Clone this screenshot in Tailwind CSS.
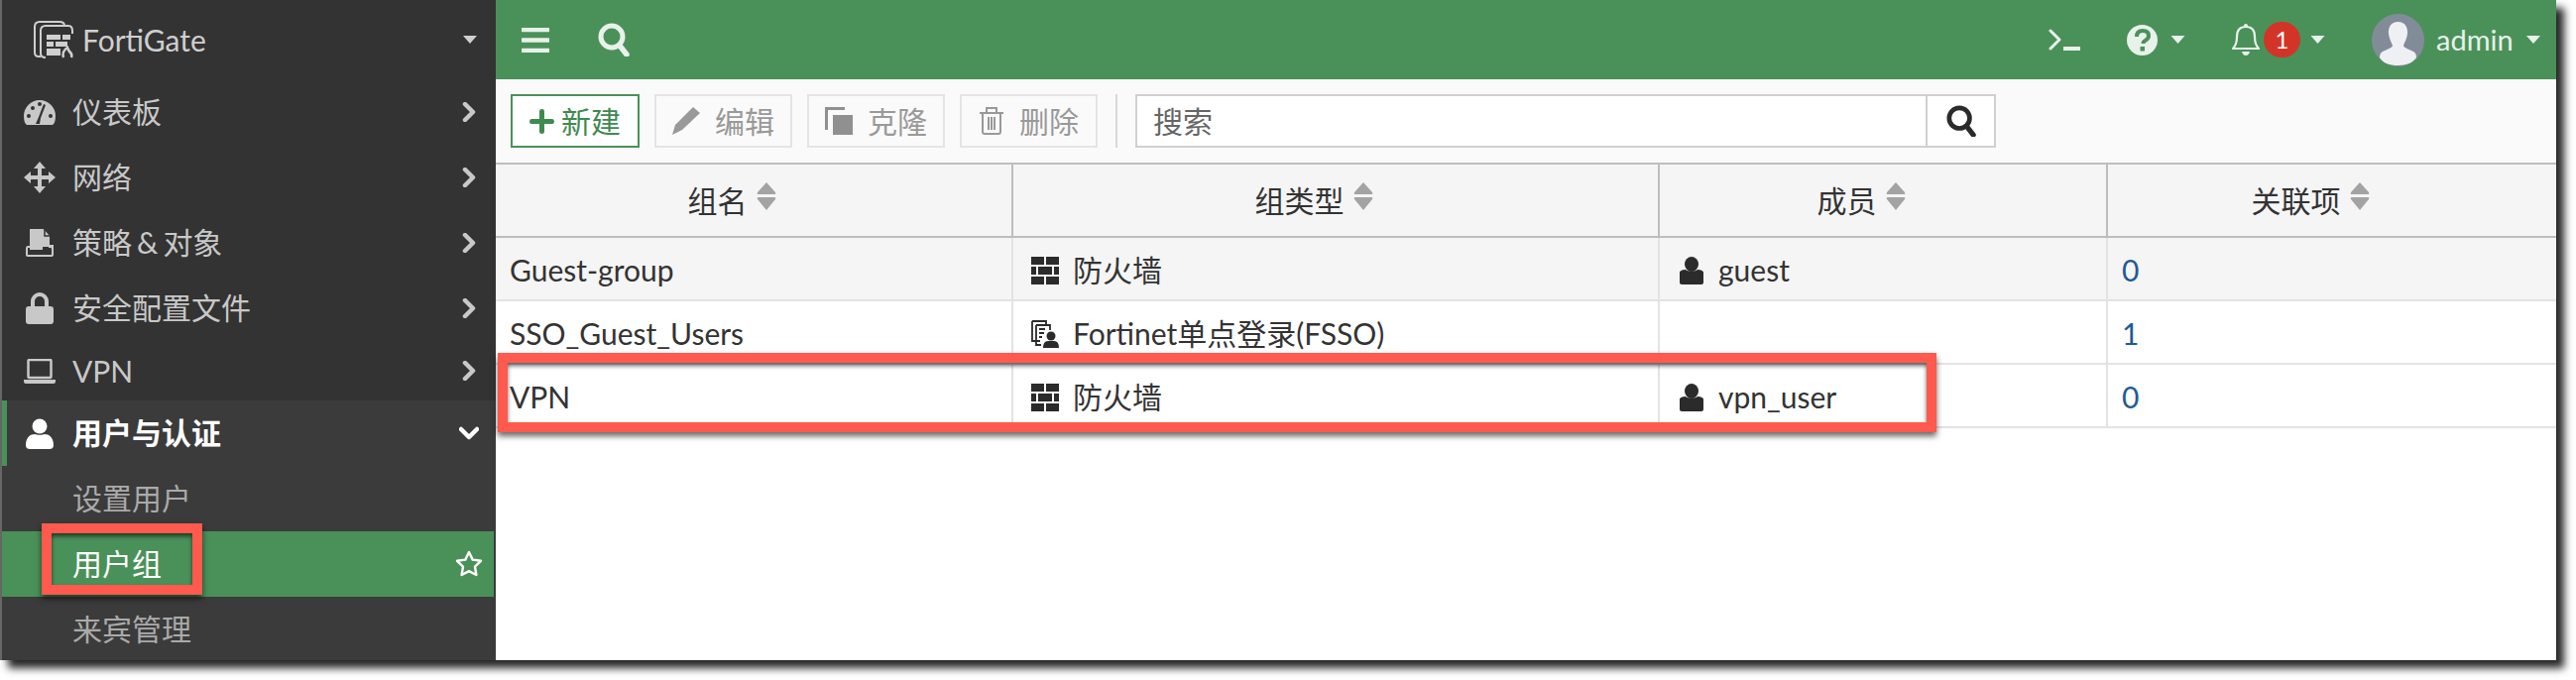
<!DOCTYPE html>
<html lang="zh-CN">
<head>
  <meta charset="UTF-8" />
  <title>FortiGate 用户组</title>
  <script src="https://cdn.jsdelivr.net/npm/@tailwindcss/browser@4"></script>
</head>
<body class="bg-white h-[686px] w-[2598px] overflow-hidden font-['Lato','Noto_Sans_CJK_SC',sans-serif] text-[30px] text-[#333]">
  <svg class="hidden">
    <symbol id="chev" viewBox="0 0 14 20"><path d="M3 2l8 8-8 8" fill="none" stroke="currentColor" stroke-width="4.5" stroke-linejoin="round" stroke-linecap="round"/></symbol>
    <symbol id="caret" viewBox="0 0 14 8"><path d="M0 0h14L7 8z" fill="currentColor"/></symbol>
    <symbol id="user" viewBox="0 0 28 31"><circle cx="14" cy="8" r="7.5" fill="currentColor"/><path d="M0 27c0-8 5-11 9-11 2 1 8 1 10 0 4 0 9 3 9 11 0 3-2 4-4 4H4c-2 0-4-1-4-4z" fill="currentColor"/></symbol>
    <symbol id="sort" viewBox="0 0 20 28"><path d="M10 0L19 10Q20 12 18 12H2Q0 12 1 10z M2 15H18Q20 15 19 17L10 28L1 17Q0 15 2 15z" fill="#a3a3a3"/></symbol>
    <symbol id="brick" viewBox="0 0 28 28"><path d="M0 0h13v8H0zM15 0h13v8H15zM0 10h5v8H0zM7 10h14v8H7zM23 10h5v8h-5zM0 20h13v8H0zM15 20h13v8H15z" fill="#2b2b2b"/></symbol>
    <symbol id="member" viewBox="0 0 24 28"><ellipse cx="12" cy="7.5" rx="7" ry="7.5" fill="#2b2b2b"/><path d="M0 16c0-2 3-3 6-3 2 2 10 2 12 0 3 0 6 1 6 3v10c0 1-1 2-2 2H2c-1 0-2-1-2-2z" fill="#2b2b2b"/></symbol>
    <symbol id="search" viewBox="0 0 32 34"><circle cx="14" cy="14" r="11" fill="none" stroke="currentColor" stroke-width="5"/><path d="M22 23l7 9" stroke="currentColor" stroke-width="5.5" stroke-linecap="round"/></symbol>
  </svg>

  <div class="relative flex w-[2578px] h-[666px] border-l-2 border-[#666] shadow-[8px_8px_8px_rgba(0,0,0,0.85)]">
    <!-- 侧边栏 -->
    <aside class="w-[498px] h-full overflow-hidden bg-[#333] text-[#c8c8c8] shrink-0">
      <div class="h-[80px] flex items-center pl-[31px] pr-[18px] text-[#cfcfcf]">
        <svg class="w-[42px] h-[40px]" viewBox="0 0 42 40" fill="none" stroke="currentColor" stroke-width="2">
          <path d="M8 37H6q-4 0-4-4V7q0-5 5-5h20q5 0 5 4"/>
          <path d="M13 38q-5 0-5-4V11q0-5 5-5h23q4 0 4 5v3"/>
          <path d="M14 15h14v5H14zM30 15h8v5h-8zM14 22h7v5h-7zM23 22h12v5H23zM14 29h14v7H14z" fill="currentColor" stroke="none"/>
          <path d="M31 38q-2-6 4-10 1 3 3 5 2 2 1 5" stroke-width="2.5"/>
        </svg>
        <span class="ml-[8px] text-[#cfcfcf]">FortiGate</span>
        <svg class="w-[14px] h-[8px] ml-auto mr-[1px]"><use href="#caret"/></svg>
      </div>

      <div class="h-[66px] flex items-center pl-[22px] pr-[20px]">
        <svg class="w-[32px] h-[26px]" viewBox="0 0 32 26"><path d="M3 26Q0 24 0 17A16 16 0 0 1 32 17Q32 24 29 26z" fill="currentColor"/><path d="M16 25l1-6 5-13-2-1-5 13-3 7z" fill="#333"/><circle cx="5" cy="17" r="2" fill="#333"/><circle cx="9" cy="9" r="2" fill="#333"/><circle cx="16" cy="5" r="2" fill="#333"/><circle cx="27" cy="17" r="2" fill="#333"/></svg>
        <span class="ml-[17px] -mt-[2px]">仪表板</span>
        <svg class="w-[14px] h-[20px] ml-auto"><use href="#chev"/></svg>
      </div>
      <div class="h-[66px] flex items-center pl-[22px] pr-[20px]">
        <svg class="w-[32px] h-[32px]" viewBox="0 0 32 32"><path d="M16 0l6 7h-4v7h7v-4l7 6-7 6v-4h-7v7h4l-6 7-6-7h4v-7H7v4l-7-6 7-6v4h7V7h-4z" fill="currentColor"/></svg>
        <span class="ml-[17px] -mt-[2px]">网络</span>
        <svg class="w-[14px] h-[20px] ml-auto"><use href="#chev"/></svg>
      </div>
      <div class="h-[66px] flex items-center pl-[24px] pr-[20px]">
        <svg class="w-[28px] h-[28px]" viewBox="0 0 28 28"><path d="M4 0h14l6 7v10h-8v3H4z" fill="currentColor"/><path d="M19 0v7h5" fill="none" stroke="#333" stroke-width="1.5"/><path d="M4 18H2q-1 0-1 2v6q0 1 2 1h22q2 0 2-1v-6q0-2-2-2h-2" fill="none" stroke="currentColor" stroke-width="2"/><path d="M4 20h12v-3h11v3" fill="none" stroke="currentColor" stroke-width="2"/></svg>
        <span class="ml-[19px] -mt-[2px]">策略<span class="mx-[5px]">&amp;</span>对象</span>
        <svg class="w-[14px] h-[20px] ml-auto"><use href="#chev"/></svg>
      </div>
      <div class="h-[66px] flex items-center pl-[24px] pr-[20px]">
        <svg class="w-[28px] h-[32px]" viewBox="0 0 28 32"><path d="M7 15V9a7 7 0 0 1 14 0v6" fill="none" stroke="currentColor" stroke-width="4"/><rect y="14" width="28" height="18" rx="3" fill="currentColor"/></svg>
        <span class="ml-[19px] -mt-[2px]">安全配置文件</span>
        <svg class="w-[14px] h-[20px] ml-auto"><use href="#chev"/></svg>
      </div>
      <div class="h-[60px] flex items-center pl-[22px] pr-[20px]">
        <svg class="w-[32px] h-[25px]" viewBox="0 0 32 25"><rect x="4.5" y="1" width="23" height="18" rx="1" fill="none" stroke="currentColor" stroke-width="2.5"/><path d="M0 21h32v2q0 2-2 2H2q-2 0-2-2z" fill="currentColor"/></svg>
        <span class="ml-[17px]">VPN</span>
        <svg class="w-[14px] h-[20px] ml-auto"><use href="#chev"/></svg>
      </div>

      <div class="bg-[#3b3b3b] h-[262px]">
        <div class="h-[66px] flex items-center border-l-[5px] border-[#4a9159] pl-[19px] pr-[17px] text-white font-bold">
          <svg class="w-[28px] h-[31px]"><use href="#user"/></svg>
          <span class="ml-[19px] -mt-[2px]">用户与认证</span>
          <svg class="w-[20px] h-[14px] ml-auto" viewBox="0 0 20 14"><path d="M2 3l8 8 8-8" fill="none" stroke="currentColor" stroke-width="4.5" stroke-linecap="round" stroke-linejoin="round"/></svg>
        </div>
        <div class="h-[66px] flex items-center pl-[71px] pb-[2px] text-[#aaa]">设置用户</div>
        <div class="h-[66px] flex items-center mr-[2px] pl-[71px] pr-[10px] bg-[#4a9159] text-white">
          <span class="-mt-[2px]">用户组</span>
          <svg class="w-[30px] h-[30px] ml-auto" viewBox="0 0 30 30"><path d="M15 3l3.7 7.6 8.3 1.2-6 5.9 1.4 8.3-7.4-3.9-7.4 3.9L9 17.7l-6-5.9 8.3-1.2z" fill="none" stroke="currentColor" stroke-width="2.4" stroke-linejoin="round"/></svg>
        </div>
        <div class="h-[64px] flex items-center pl-[71px] text-[#aaa]">来宾管理</div>
      </div>
    </aside>

    <!-- 主区域 -->
    <main class="flex-1 min-w-0 bg-white">
      <header class="h-[80px] bg-[#4a9159] flex items-center text-[#e8f1ea]">
        <svg class="ml-[26px] w-[28px] h-[25px]" viewBox="0 0 28 25"><path d="M1 2h26M1 12.500h26M1 23h26" stroke="currentColor" stroke-width="4.5" stroke-linecap="round"/></svg>
        <svg class="ml-[49px] w-[32px] h-[34px]"><use href="#search"/></svg>
        <svg class="ml-auto w-[32px] h-[22px]" viewBox="0 0 32 22"><path d="M2 2l9 9-9 9" fill="none" stroke="currentColor" stroke-width="3" stroke-linecap="round" stroke-linejoin="round"/><path d="M15 20h17" stroke="currentColor" stroke-width="4"/></svg>
        <svg class="ml-[47px] w-[31px] h-[31px]" viewBox="0 0 31 31"><circle cx="15.500" cy="15.500" r="15.500" fill="currentColor"/><path d="M10 12q0-6 6-6t6 5q0 3-3.500 5-2 1-2 3" fill="none" stroke="#4a9159" stroke-width="4"/><rect x="13.500" y="22" width="4.500" height="4.500" fill="#4a9159"/></svg>
        <svg class="ml-[13px] w-[15px] h-[8px]"><use href="#caret"/></svg>
        <svg class="ml-[47px] w-[28px] h-[32px]" viewBox="0 0 28 32"><path d="M14 3q-9 0-9 10 0 8-4 12h26q-4-4-4-12 0-10-9-10z" fill="none" stroke="currentColor" stroke-width="2.2" stroke-linejoin="round"/><circle cx="14" cy="2" r="2" fill="currentColor"/><path d="M10 28h8q-1 4-4 4t-4-4z" fill="currentColor"/></svg>
        <span class="ml-[4px] w-[37px] h-[36px] rounded-full bg-[#d43427] text-white text-[24px] flex items-center justify-center">1</span>
        <svg class="ml-[10px] w-[15px] h-[8px]"><use href="#caret"/></svg>
        <svg class="ml-[47px] w-[53px] h-[53px] rounded-full bg-[#828c99]" viewBox="0 0 53 53"><path d="M26.500 8c7 0 10 5 9.500 12-.5 5-3 9-4 12 0 2 6 4 10 6 2 1 3 3 3 6-3 5-10 8-18.500 8S11 50 8 44c0-3 1-5 3-6 4-2 10-4 10-6-1-3-3.500-7-4-12-.5-7 2.500-12 9.500-12z" fill="#eef0f3"/></svg>
        <span class="ml-[12px] w-[80px] text-[29px] whitespace-nowrap">admin</span>
        <svg class="ml-[11px] mr-[16px] w-[14px] h-[8px]"><use href="#caret"/></svg>
      </header>

      <div class="h-[84px] bg-[#fafafa] flex items-center pl-[15px]">
        <button class="w-[130px] h-[54px] border-2 border-[#4a9159] bg-white text-[#3f8a50] flex items-center justify-center">
          <svg class="w-[25px] h-[25px] mr-[7px]" viewBox="0 0 25 25"><path d="M10 2q0-2 2.500-2T15 2v8h8q2 0 2 2.500T23 15h-8v8q0 2-2.500 2T10 23v-8H2q-2 0-2-2.500T2 10h8z" fill="currentColor"/></svg>新建
        </button>
        <button class="ml-[15px] w-[139px] h-[54px] border-2 border-[#e4e4e4] text-[#999] flex items-center justify-center">
          <svg class="w-[28px] h-[28px] mr-[15px]" viewBox="0 0 28 28"><path d="M21 0l7 6-18 17-10 5 3-10z" fill="currentColor"/></svg>编辑
        </button>
        <button class="ml-[15px] w-[139px] h-[54px] border-2 border-[#e4e4e4] text-[#999] flex items-center justify-center">
          <svg class="w-[28px] h-[28px] mr-[15px]" viewBox="0 0 28 28"><path d="M0 0h20v3H3v20H0zM8 8h20v20H8z" fill="#909090"/></svg>克隆
        </button>
        <button class="ml-[15px] w-[139px] h-[54px] border-2 border-[#e4e4e4] text-[#999] flex items-center justify-center">
          <svg class="w-[26px] h-[28px] mr-[15px]" viewBox="0 0 26 28" fill="none" stroke="currentColor" stroke-width="2"><path d="M1 6h24M8 6V1h10v5M4 6v19q0 2 2 2h14q2 0 2-2V6M10 10v13M13 10v13M16 10v13"/></svg>删除
        </button>
        <div class="ml-[18px] w-[2px] h-[54px] bg-[#d8d8d8]"></div>
        <div class="ml-[18px] w-[868px] h-[54px] border-2 border-[#d0d0d0] bg-white flex items-center">
          <span class="flex-1 pl-[16px] text-[#666]">搜索</span>
          <span class="w-[69px] h-full border-l-2 border-[#d0d0d0] flex items-center justify-center text-[#2b2b2b]">
            <svg class="w-[30px] h-[32px]"><use href="#search"/></svg>
          </span>
        </div>
      </div>

      <div class="grid grid-cols-[522px_652px_452px_452px] h-[76px] border-y-2 border-[#bdbdbd] bg-[#f5f5f5]">
        <div class="border-r-2 border-[#bdbdbd] flex items-center justify-center pr-[44px]">组名<svg class="ml-[9px] w-[20px] h-[28px] -translate-y-[4px]"><use href="#sort"/></svg></div>
        <div class="border-r-2 border-[#bdbdbd] flex items-center justify-center pr-[44px]">组类型<svg class="ml-[9px] w-[20px] h-[28px] -translate-y-[4px]"><use href="#sort"/></svg></div>
        <div class="border-r-2 border-[#bdbdbd] flex items-center justify-center pr-[44px]">成员<svg class="ml-[9px] w-[20px] h-[28px] -translate-y-[4px]"><use href="#sort"/></svg></div>
        <div class="flex items-center justify-center pr-[44px]">关联项<svg class="ml-[9px] w-[20px] h-[28px] -translate-y-[4px]"><use href="#sort"/></svg></div>
      </div>

      <div class="grid grid-cols-[522px_652px_452px_452px] h-[64px] border-b-2 border-[#e3e3e3] bg-[#f5f5f5]">
        <div class="border-r-2 border-[#e3e3e3] flex items-center pl-[14px] pt-[3px]">Guest-group</div>
        <div class="border-r-2 border-[#e3e3e3] flex items-center pl-[18px] pt-[3px]"><svg class="w-[28px] h-[28px] mr-[14px]"><use href="#brick"/></svg>防火墙</div>
        <div class="border-r-2 border-[#e3e3e3] flex items-center pl-[20px] pt-[3px]"><svg class="w-[24px] h-[28px] mr-[15px]"><use href="#member"/></svg>guest</div>
        <div class="flex items-center pl-[14px] pt-[3px] text-[#1f5b96]">0</div>
      </div>
      <div class="grid grid-cols-[522px_652px_452px_452px] h-[64px] border-b-2 border-[#e3e3e3]">
        <div class="border-r-2 border-[#e3e3e3] flex items-center pl-[14px] pt-[3px]">SSO_Guest_Users</div>
        <div class="border-r-2 border-[#e3e3e3] flex items-center pl-[18px] pt-[3px]">
          <svg class="w-[28px] h-[28px] mr-[14px]" viewBox="0 0 28 28"><path d="M1 1h14v4M1 1v20h8M5 5h14v5M5 5v20h5M8 9h6M8 13h5M8 17h3" fill="none" stroke="#2b2b2b" stroke-width="1.800"/><circle cx="20" cy="16" r="4.500" fill="#2b2b2b"/><path d="M12 28q0-7 5-7h6q5 0 5 7z" fill="#2b2b2b"/></svg>Fortinet单点登录(FSSO)</div>
        <div class="border-r-2 border-[#e3e3e3]"></div>
        <div class="flex items-center pl-[14px] pt-[3px] text-[#1f5b96]">1</div>
      </div>
      <div class="grid grid-cols-[522px_652px_452px_452px] h-[64px] border-b-2 border-[#e3e3e3]">
        <div class="border-r-2 border-[#e3e3e3] flex items-center pl-[14px] pt-[3px]">VPN</div>
        <div class="border-r-2 border-[#e3e3e3] flex items-center pl-[18px] pt-[3px]"><svg class="w-[28px] h-[28px] mr-[14px]"><use href="#brick"/></svg>防火墙</div>
        <div class="border-r-2 border-[#e3e3e3] flex items-center pl-[20px] pt-[3px]"><svg class="w-[24px] h-[28px] mr-[15px]"><use href="#member"/></svg>vpn_user</div>
        <div class="flex items-center pl-[14px] pt-[3px] text-[#1f5b96]">0</div>
      </div>
    </main>

    <!-- 红色标注框 -->
    <div class="absolute left-[40px] top-[528px] w-[162px] h-[72px] border-[10px] border-[#ff5a4d] shadow-[0_4px_6px_rgba(0,0,0,0.6),inset_0_3px_4px_rgba(0,0,0,0.6)]"></div>
    <div class="absolute left-[500px] top-[356px] w-[1451px] h-[80px] border-[10px] border-[#ff5a4d] shadow-[0_4px_6px_rgba(0,0,0,0.6),inset_0_3px_4px_rgba(0,0,0,0.6)]"></div>
  </div>
</body>
</html>
